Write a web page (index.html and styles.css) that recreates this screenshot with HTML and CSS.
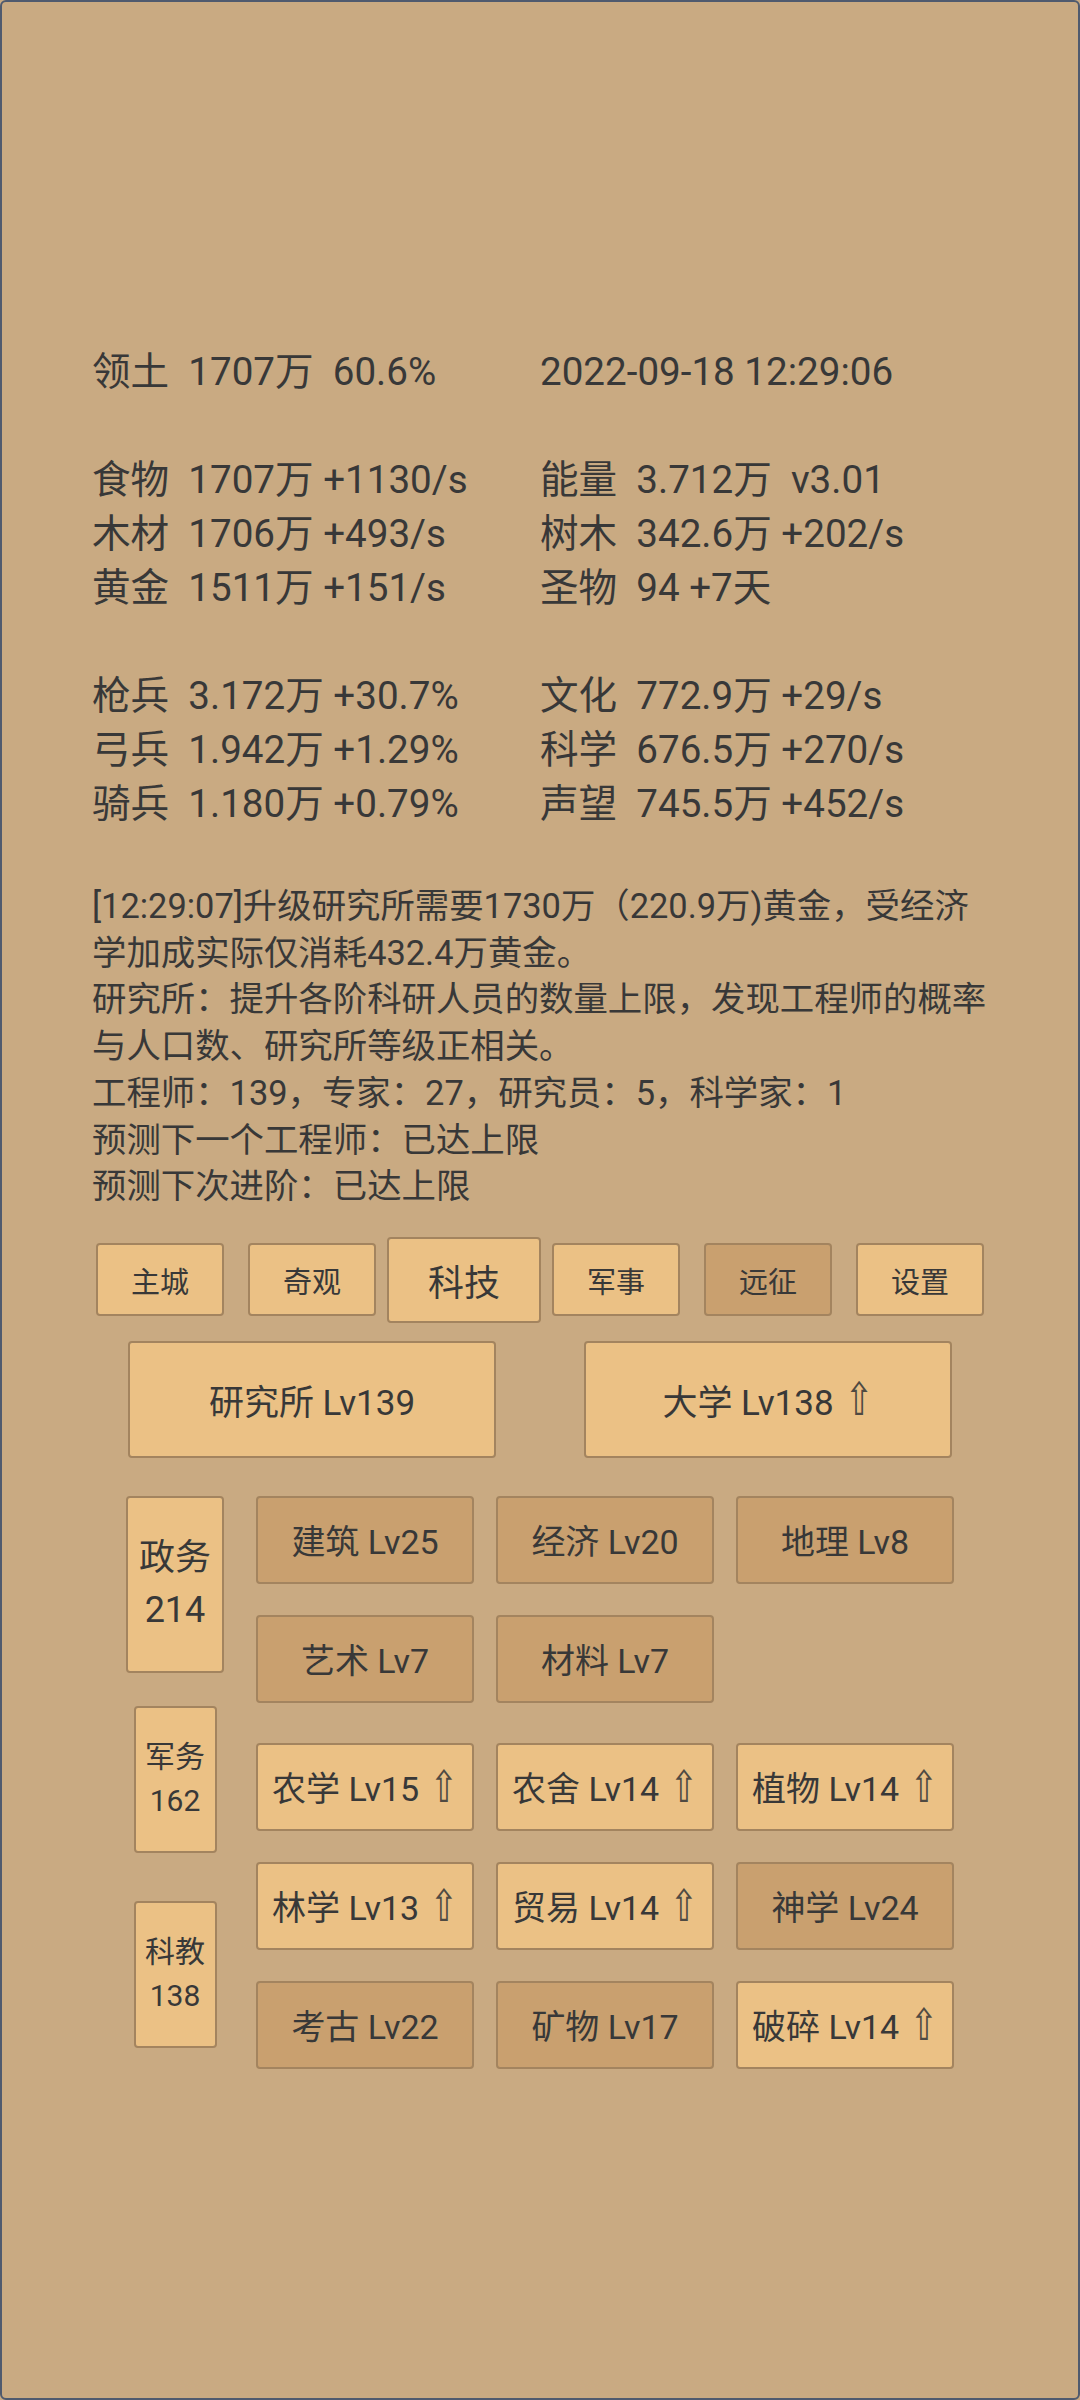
FILE: index.html
```html
<!DOCTYPE html>
<html lang="zh-CN">
<head>
<meta charset="utf-8">
<title>科技</title>
<link rel="stylesheet" href="styles.css">
</head>
<body>
<div class="page">
  <div class="stats">
    <div>领土  1707万  60.6%</div><div>2022-09-18 12:29:06</div>
    <div class="blank"></div>
    <div>食物  1707万 +1130/s</div><div>能量  3.712万  v3.01</div>
    <div>木材  1706万 +493/s</div><div>树木  342.6万 +202/s</div>
    <div>黄金  1511万 +151/s</div><div>圣物  94 +7天</div>
    <div class="blank"></div>
    <div>枪兵  3.172万 +30.7%</div><div>文化  772.9万 +29/s</div>
    <div>弓兵  1.942万 +1.29%</div><div>科学  676.5万 +270/s</div>
    <div>骑兵  1.180万 +0.79%</div><div>声望  745.5万 +452/s</div>
  </div>

  <div class="log">
    <div>[12:29:07]升级研究所需要1730万（220.9万)黄金，受经济</div>
    <div>学加成实际仅消耗432.4万黄金。</div>
    <div>研究所：提升各阶科研人员的数量上限，发现工程师的概率</div>
    <div>与人口数、研究所等级正相关。</div>
    <div>工程师：139，专家：27，研究员：5，科学家：1</div>
    <div>预测下一个工程师：已达上限</div>
    <div>预测下次进阶：已达上限</div>
  </div>

  <div class="tabs">
    <div class="slot"><div class="btn tab">主城</div></div>
    <div class="slot"><div class="btn tab">奇观</div></div>
    <div class="slot"><div class="btn tab active">科技</div></div>
    <div class="slot"><div class="btn tab">军事</div></div>
    <div class="slot"><div class="btn tab dark">远征</div></div>
    <div class="slot"><div class="btn tab">设置</div></div>
  </div>

  <div class="main-buildings">
    <div class="half"><div class="btn building">研究所 Lv139</div></div>
    <div class="half"><div class="btn building">大学 Lv138 <span class="up">⇧</span></div></div>
  </div>

  <div class="tech-area">
    <div class="cats">
      <div class="btn cat big"><span>政务</span><span>214</span></div>
      <div class="btn cat small mil"><span>军务</span><span>162</span></div>
      <div class="btn cat small edu"><span>科教</span><span>138</span></div>
    </div>
    <div class="tech-groups">
      <div class="tech-grid">
        <div class="btn tech dark">建筑 Lv25</div>
        <div class="btn tech dark">经济 Lv20</div>
        <div class="btn tech dark">地理 Lv8</div>
        <div class="btn tech dark">艺术 Lv7</div>
        <div class="btn tech dark">材料 Lv7</div>
      </div>
      <div class="tech-grid second">
        <div class="btn tech">农学 Lv15 <span class="up">⇧</span></div>
        <div class="btn tech">农舍 Lv14 <span class="up">⇧</span></div>
        <div class="btn tech">植物 Lv14 <span class="up">⇧</span></div>
        <div class="btn tech">林学 Lv13 <span class="up">⇧</span></div>
        <div class="btn tech">贸易 Lv14 <span class="up">⇧</span></div>
        <div class="btn tech dark">神学 Lv24</div>
        <div class="btn tech dark">考古 Lv22</div>
        <div class="btn tech dark">矿物 Lv17</div>
        <div class="btn tech">破碎 Lv14 <span class="up">⇧</span></div>
      </div>
    </div>
  </div>
</div>
</body>
</html>
```

FILE: styles.css
```css
html, body {
  margin: 0;
  padding: 0;
  background: #c9aa82;
}

.page {
  width: 1080px;
  height: 2400px;
  box-sizing: border-box;
  border: 2px solid #4f5a6e;
  border-radius: 6px;
  background: #c9aa82;
  color: #383838;
  font-family: Roboto, "Noto Sans CJK SC", sans-serif;
  padding-top: 343px;
  overflow: hidden;
}

.stats {
  display: grid;
  grid-template-columns: 448px 1fr;
  padding-left: 90px;
  font-size: 38.6px;
  line-height: 54px;
  white-space: pre;
}

.stats .blank {
  grid-column: 1 / -1;
  height: 54px;
}

.log {
  margin-top: 52px;
  padding-left: 90px;
  font-size: 34.4px;
  line-height: 46.7px;
  white-space: nowrap;
}

.btn {
  box-sizing: border-box;
  background: #ebc185;
  border: 2px solid #a3845f;
  border-radius: 4px;
  display: flex;
  align-items: center;
  justify-content: center;
  white-space: pre;
  flex-shrink: 0;
}

.btn.dark {
  background: #c9a06f;
}

.tabs {
  margin-top: 27px;
  height: 86px;
  display: flex;
  padding-left: 82px;
}

.slot {
  width: 152px;
  display: flex;
  align-items: center;
  justify-content: center;
}

.tab {
  width: 128px;
  height: 73px;
  font-size: 29px;
}

.tab.active {
  width: 154px;
  height: 86px;
  font-size: 36px;
}

.main-buildings {
  margin-top: 18px;
  display: flex;
  padding-left: 82px;
}

.half {
  width: 456px;
  display: flex;
  justify-content: center;
}

.building {
  width: 368px;
  height: 117px;
  font-size: 35px;
}

.up {
  display: inline-block;
  font-family: "DejaVu Sans", sans-serif;
  font-weight: normal;
  color: #4f4a42;
  font-size: 1.3em;
  line-height: 1;
  transform: scaleX(0.75);
  margin: 0 -0.1em 0 -0.05em;
}

.tech-area {
  margin-top: 38px;
  display: flex;
  align-items: flex-start;
}

.cats {
  margin-left: 93px;
  width: 160px;
  display: flex;
  flex-direction: column;
  align-items: center;
}

.cat {
  flex-direction: column;
}

.cat.big {
  width: 98px;
  height: 177px;
  font-size: 36px;
  line-height: 52px;
}

.cat.small {
  width: 83px;
  height: 147px;
  font-size: 30px;
  line-height: 44px;
}

.cat.mil {
  margin-top: 33px;
}

.cat.edu {
  margin-top: 48px;
}

.tech-groups {
  margin-left: 1px;
}

.tech-grid {
  display: grid;
  grid-template-columns: repeat(3, 218px);
  grid-auto-rows: 88px;
  column-gap: 22px;
  row-gap: 31px;
}

.tech-grid.second {
  margin-top: 40px;
}

.tech {
  font-size: 34px;
}
```
